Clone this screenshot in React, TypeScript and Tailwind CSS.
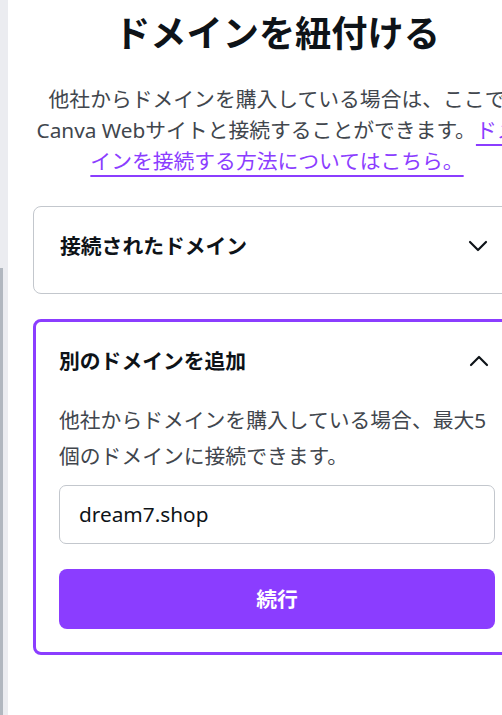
import React from "react";
import { ChevronDown, ChevronUp } from "lucide-react";

const font = "font-['Noto_Sans','Noto_Sans_CJK_JP',sans-serif]";

const App = () => {
  return (
    <div className={`flex w-[502px] h-[715px] overflow-hidden bg-white ${font}`}>
      {/* page edge on the left */}
      <div className="flex flex-col w-[8px] shrink-0 bg-[#ebecf0]">
        <div className="h-[268px]" />
        <div className="flex-1 w-[3px] bg-[#b1b7bf]" />
      </div>

      <div className="shrink-0 w-[488px] ml-[25px] pt-[10px]">
        <h1 className="text-center text-[36.2px] leading-[46px] font-bold text-[#0e1318]">
          ドメインを紐付ける
        </h1>
        <p className="mt-[28px] text-center text-[20.8px] leading-[31.2px] text-[#41464d]">
          他社からドメインを購入している場合は、ここでCanva Webサイトと接続することができます。
          <a
            href="#"
            className="text-[#8b3dff] underline decoration-2 underline-offset-[6px]"
          >
            ドメインを接続する方法についてはこちら。{" "}
          </a>
        </p>

        <div className="mt-[28px] rounded-[8px] border border-[#c3c7cd] px-[26px] pt-[24px] pb-[31px]">
          <div className="flex h-[31px] items-center justify-between">
            <span className="text-[20.8px] font-bold text-[#0e1318]">接続されたドメイン</span>
            <ChevronDown size={32} strokeWidth={1.6} className="text-[#0e1318]" />
          </div>
        </div>

        <div className="mt-[25px] rounded-[8px] border-[3px] border-[#8b3dff] px-[23px] pt-[24px] pb-[23px]">
          <div className="flex h-[31px] items-center justify-between">
            <span className="text-[20.8px] font-bold text-[#0e1318]">別のドメインを追加</span>
            <ChevronUp size={32} strokeWidth={1.6} className="text-[#0e1318]" />
          </div>
          <p className="mt-[25px] text-[20.8px] leading-[36.4px] text-[#41464d]">
            他社からドメインを購入している場合、最大5個のドメインに接続できます。
          </p>
          <div className="mt-[11px] flex h-[59px] items-center rounded-[7px] border border-[#c3c7cd] px-[19px]">
            <span className="text-[20.8px] text-[#0e1318]">dream7.shop</span>
          </div>
          <button className="mt-[25px] flex h-[60px] w-full items-center justify-center rounded-[8px] bg-[#8b3dff] text-[20.8px] font-bold text-white">
            続行
          </button>
        </div>
      </div>
    </div>
  );
};

export default App;
